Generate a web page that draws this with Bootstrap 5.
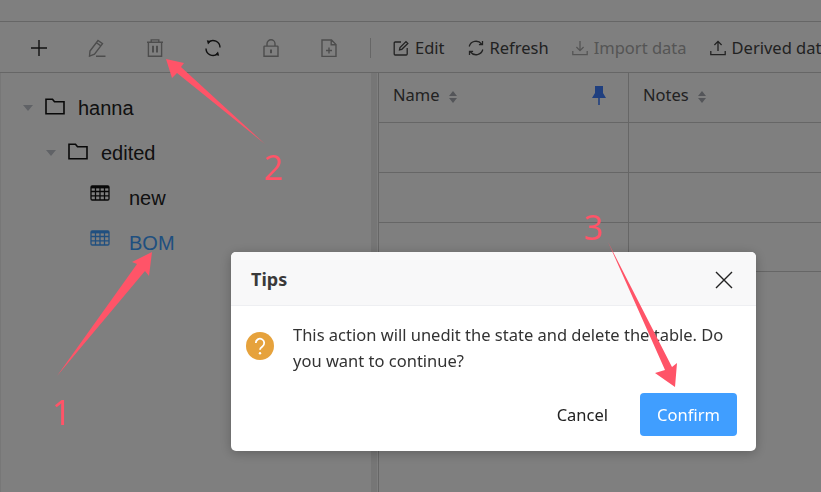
<!DOCTYPE html>
<html lang="en">

<head>
    <meta charset="UTF-8">
    <meta name="viewport" content="width=device-width, initial-scale=1.0">
    <link href="https://cdn.jsdelivr.net/npm/bootstrap@5.3.1/dist/css/bootstrap.min.css" rel="stylesheet">
    <title>Tips</title>

    <style>
        html, body {
            height: 100%;
            overflow: hidden;
            background: #fff;
        }

        body {
            font-family: "Noto Sans", "Open Sans", sans-serif;
            font-size: 16.5px;
            color: #333;
        }

        .top-strip {
            height: 22px;
            border-bottom: 1px solid #ccc;
        }

        .tool-bar {
            height: 51px;
            padding: 2px 0 0 10px;
            border-bottom: 1px solid #ccc;
            white-space: nowrap;
            overflow: hidden;
        }

        .tool-icon {
            flex: none;
            width: 58px;
            color: #222;
        }

        .tool-icon.is-off {
            color: #9a9a9a;
        }

        .tool-sep {
            flex: none;
            width: 1px;
            height: 20px;
            margin: 0 22px 0 12px;
            background: #ccc;
        }

        .tool-text {
            flex: none;
            gap: 6px;
            margin-right: 23px;
            color: #444;
        }

        .tool-text.is-off {
            color: #aaa;
        }

        .work-area {
            height: 419px;
        }

        .tree-pane {
            width: 371px;
            padding-top: 12px;
            border-left: 1px solid #eee;
            font-family: "Liberation Sans", Arial, sans-serif;
            font-size: 20px;
            color: #222;
        }

        .tree-row {
            height: 45px;
        }

        .tree-caret {
            width: 0;
            height: 0;
            border-left: 5px solid transparent;
            border-right: 5px solid transparent;
            border-top: 6px solid #c0c4cc;
        }

        .level-one { padding-left: 22px; }
        .level-two { padding-left: 45px; }
        .level-three { padding-left: 89px; }
        .level-one .tree-caret, .level-two .tree-caret { margin-right: 12px; }
        .level-one svg, .level-two svg { margin: -3px 13px 0 0; }
        .level-three svg { margin: -9px 19px 0 0; }

        .tree-active {
            color: #409eff;
        }

        .split-bar {
            width: 6px;
            background: #ececec;
            margin-right: 1px;
        }

        .grid-pane {
            flex: 1;
            min-width: 0;
            border-left: 1px solid #ccc;
            overflow: hidden;
        }

        .grid-table {
            width: 500px;
            table-layout: fixed;
            border-collapse: separate;
            border-spacing: 0;
        }

        .grid-table th, .grid-table td {
            height: 50px;
            width: 250px;
            padding: 0 14px 4px;
            border-right: 1px solid #ccc;
            border-bottom: 1px solid #ccc;
            font-weight: 400;
            color: #444;
        }

        .grid-table tbody tr:last-child td {
            height: 49px;
        }

        .sort-mark {
            display: inline-flex;
            flex-direction: column;
            gap: 2px;
            margin-left: 9px;
            vertical-align: 5px;
        }

        .sort-mark i {
            width: 0;
            height: 0;
            border-left: 4.5px solid transparent;
            border-right: 4.5px solid transparent;
        }

        .sort-mark i:first-child { border-bottom: 5px solid #a8abb2; }
        .sort-mark i:last-child { border-top: 5px solid #a8abb2; }

        .pin-mark {
            float: right;
            margin: 3px 8px 0 0;
        }

        .dim-layer {
            position: fixed;
            inset: 0;
            background: rgba(0, 0, 0, .5);
        }

        .tips-box {
            position: fixed;
            left: 231px;
            top: 252px;
            width: 525px;
            height: 199px;
            border-radius: 5px;
            background: #fff;
            box-shadow: 0 2px 12px rgba(0, 0, 0, .25);
            overflow: hidden;
        }

        .tips-head {
            height: 54px;
            padding: 2px 23px 0 20px;
            background: #f8f8f9;
            border-bottom: 1px solid #eeeff2;
        }

        .tips-title {
            font-size: 18px;
            font-weight: 700;
            color: #3a3a3a;
        }

        .tips-body {
            height: 87px;
            padding: 16px 20px 0 15px;
            gap: 19px;
            line-height: 26px;
            color: #333;
        }

        .tips-body svg {
            flex: none;
            margin-top: 10px;
        }

        .tips-foot {
            gap: 32px;
            padding-right: 19px;
        }

        .btn-cancel, .btn-confirm {
            font-size: 16.5px;
            border-radius: 4px;
        }

        .btn-cancel {
            padding: 2px 0 0;
            border: 0;
            color: #222;
        }

        .btn-confirm {
            width: 97px;
            height: 43px;
            padding: 2px 0 0;
            border: 0;
            background: #409eff;
            color: #fff;
        }

        .note-layer {
            position: fixed;
            inset: 0;
            pointer-events: none;
        }

        .note-num {
            font-family: "Noto Sans", "Liberation Sans", sans-serif;
            font-weight: 400;
            font-size: 34px;
            fill: #ff5468;
        }
    </style>
</head>

<body>
    <div class="top-strip"></div>

    <div class="tool-bar d-flex align-items-center">
        <span class="tool-icon d-flex justify-content-center">
            <svg width="18" height="18" viewBox="0 0 18 18" fill="none" stroke="currentColor" stroke-width="1.4"><path d="M9 1v16M1 9h16"/></svg>
        </span>
        <span class="tool-icon is-off d-flex justify-content-center">
            <svg width="18" height="18" viewBox="0 0 18 18" fill="none" stroke="currentColor" stroke-width="1.4"><path d="M2 12 10 1.5l4.5 3.2-8 10.4-5 2zM8.4 3.7l4.5 3.2M8 17.2h9.5"/></svg>
        </span>
        <span class="tool-icon is-off d-flex justify-content-center">
            <svg width="18" height="18" viewBox="0 0 18 18" fill="none" stroke="currentColor" stroke-width="1.4"><path d="M1 3.2h16M5.2 3.2V.9h7.6v2.3M2.4 3.2v14h13.2v-14"/><path d="M7 6.8v6.6M11 6.8v6.6" stroke-width="2"/></svg>
        </span>
        <span class="tool-icon d-flex justify-content-center">
            <svg width="18" height="18" viewBox="0 0 18 18" fill="none" stroke="currentColor" stroke-width="1.4"><path d="M4.5 3.2A7 7 0 0 1 16 8.5M13.5 14.8A7 7 0 0 1 2 9.5"/><path d="M2.8 1.2 7 2 4 5.4zM15.2 16.8 11 16l3-3.4z" fill="currentColor" stroke="none"/></svg>
        </span>
        <span class="tool-icon is-off d-flex justify-content-center">
            <svg width="18" height="18" viewBox="0 0 18 18" fill="none" stroke="currentColor" stroke-width="1.4"><path d="M2 7.8a.7.7 0 0 1 .7-.7h12.6a.7.7 0 0 1 .7.7v9.5H2zM5 7V4.8a4 4 0 0 1 8 0V7"/><path d="M9 10.5v3.8" stroke-width="2"/></svg>
        </span>
        <span class="tool-icon is-off d-flex justify-content-center">
            <svg width="18" height="18" viewBox="0 0 18 18" fill="none" stroke="currentColor" stroke-width="1.4"><path d="M2 1h9.5L16 5.5v12H2zM11.2 1v4.8H16M9 8.5v6M6 11.5h6"/></svg>
        </span>
        <span class="tool-sep"></span>
        <span class="tool-text d-flex align-items-center">
            <svg width="16" height="16" viewBox="0 0 16 16" fill="none" stroke="currentColor" stroke-width="1.3"><path d="M8 2H2.2a1 1 0 0 0-1 1v11a1 1 0 0 0 1 1h11a1 1 0 0 0 1-1V8M6.5 9.8l.5-2.3L13 1.6l1.8 1.8-6 5.9z"/></svg>
            Edit
        </span>
        <span class="tool-text d-flex align-items-center">
            <svg width="16" height="16" viewBox="0 0 16 16" fill="none" stroke="currentColor" stroke-width="1.3"><path d="M1.2 6.5A7 7 0 0 1 13.5 4M14.8 9.5A7 7 0 0 1 2.5 12M14.5 1v3.6h-3.6M1.5 15v-3.6h3.6"/></svg>
            Refresh
        </span>
        <span class="tool-text is-off d-flex align-items-center">
            <svg width="16" height="16" viewBox="0 0 16 16" fill="none" stroke="currentColor" stroke-width="1.3"><path d="M8 1v9.5M4.4 7 8 10.6 11.6 7M.8 11v3.6h14.4V11"/></svg>
            Import data
        </span>
        <span class="tool-text d-flex align-items-center">
            <svg width="16" height="16" viewBox="0 0 16 16" fill="none" stroke="currentColor" stroke-width="1.3"><path d="M8 11V1.4M4.4 5 8 1.4 11.6 5M.8 11v3.6h14.4V11"/></svg>
            Derived data
        </span>
    </div>

    <div class="work-area d-flex">
        <div class="tree-pane">
            <div class="tree-row level-one d-flex align-items-center">
                <span class="tree-caret"></span>
                <svg width="20" height="17" viewBox="0 0 20 17" fill="none" stroke="#111" stroke-width="1.6"><path d="M1 15.8V1.2h6.5l2 2.6h9.5v12z"/></svg>
                hanna
            </div>
            <div class="tree-row level-two d-flex align-items-center">
                <span class="tree-caret"></span>
                <svg width="20" height="17" viewBox="0 0 20 17" fill="none" stroke="#111" stroke-width="1.6"><path d="M1 15.8V1.2h6.5l2 2.6h9.5v12z"/></svg>
                edited
            </div>
            <div class="tree-row level-three d-flex align-items-center">
                <svg width="20" height="16" viewBox="0 0 20 16" fill="none" stroke="#111" stroke-width="1.3"><rect x="1" y="1" width="18" height="14" rx="1.2"/><path d="M1 2.2h18" stroke-width="2.4"/><path d="M1 6.5h18M1 10.8h18M5.5 3v12M10 3v12M14.5 3v12"/></svg>
                new
            </div>
            <div class="tree-row level-three tree-active d-flex align-items-center">
                <svg width="20" height="16" viewBox="0 0 20 16" fill="none" stroke="#409eff" stroke-width="1.3"><rect x="1" y="1" width="18" height="14" rx="1.2"/><path d="M1 2.2h18" stroke-width="2.4"/><path d="M1 6.5h18M1 10.8h18M5.5 3v12M10 3v12M14.5 3v12"/></svg>
                BOM
            </div>
        </div>
        <div class="split-bar"></div>
        <div class="grid-pane">
            <table class="grid-table">
                <thead>
                    <tr>
                        <th>Name<span class="sort-mark"><i></i><i></i></span>
                            <svg class="pin-mark" width="14" height="19" viewBox="0 0 14 19" fill="#3f7fff"><path d="M3 0h8v7l3 5H0l3-5z"/><path d="M6.2 12h1.6v7H6.2z"/></svg>
                        </th>
                        <th>Notes<span class="sort-mark"><i></i><i></i></span></th>
                    </tr>
                </thead>
                <tbody>
                    <tr><td></td><td></td></tr>
                    <tr><td></td><td></td></tr>
                    <tr><td></td><td></td></tr>
                </tbody>
            </table>
        </div>
    </div>

    <div class="dim-layer"></div>

    <div class="tips-box">
        <div class="tips-head d-flex align-items-center justify-content-between">
            <span class="tips-title">Tips</span>
            <svg width="18" height="18" viewBox="0 0 18 18" fill="none" stroke="#222" stroke-width="1.4"><path d="M1 1l16 16M17 1 1 17"/></svg>
        </div>
        <div class="tips-body d-flex">
            <svg width="28" height="28" viewBox="0 0 28 28"><circle cx="14" cy="14" r="14" fill="#e6a23c"/><path d="M9.8 11a4.2 4.2 0 1 1 6.6 3.4c-1.5 1-2.4 1.7-2.4 3.4" fill="none" stroke="#fff" stroke-width="1.8"/><circle cx="14" cy="21.3" r="1.2" fill="#fff"/></svg>
            <div>This action will unedit the state and delete the table. Do you want to continue?</div>
        </div>
        <div class="tips-foot d-flex justify-content-end align-items-center">
            <button type="button" class="btn btn-cancel">Cancel</button>
            <button type="button" class="btn btn-confirm">Confirm</button>
        </div>
    </div>

    <svg class="note-layer" width="821" height="492" viewBox="0 0 821 492">
        <polygon fill="#ff5468" points="57,376 137,264 132,262 152,252 149,276 145,271"/>
        <polygon fill="#ff5468" points="265,144 177,73 172,78 166,59 184,63 181,67"/>
        <polygon fill="#ff5468" points="608,242 665,370 655,373 675,387 677,363 672,367"/>
        <text class="note-num" x="52" y="425">1</text>
        <text class="note-num" x="264" y="180">2</text>
        <text class="note-num" x="584" y="240">3</text>
    </svg>

    <script src="https://cdn.jsdelivr.net/npm/bootstrap@5.3.1/dist/js/bootstrap.bundle.min.js"></script>
</body>

</html>
